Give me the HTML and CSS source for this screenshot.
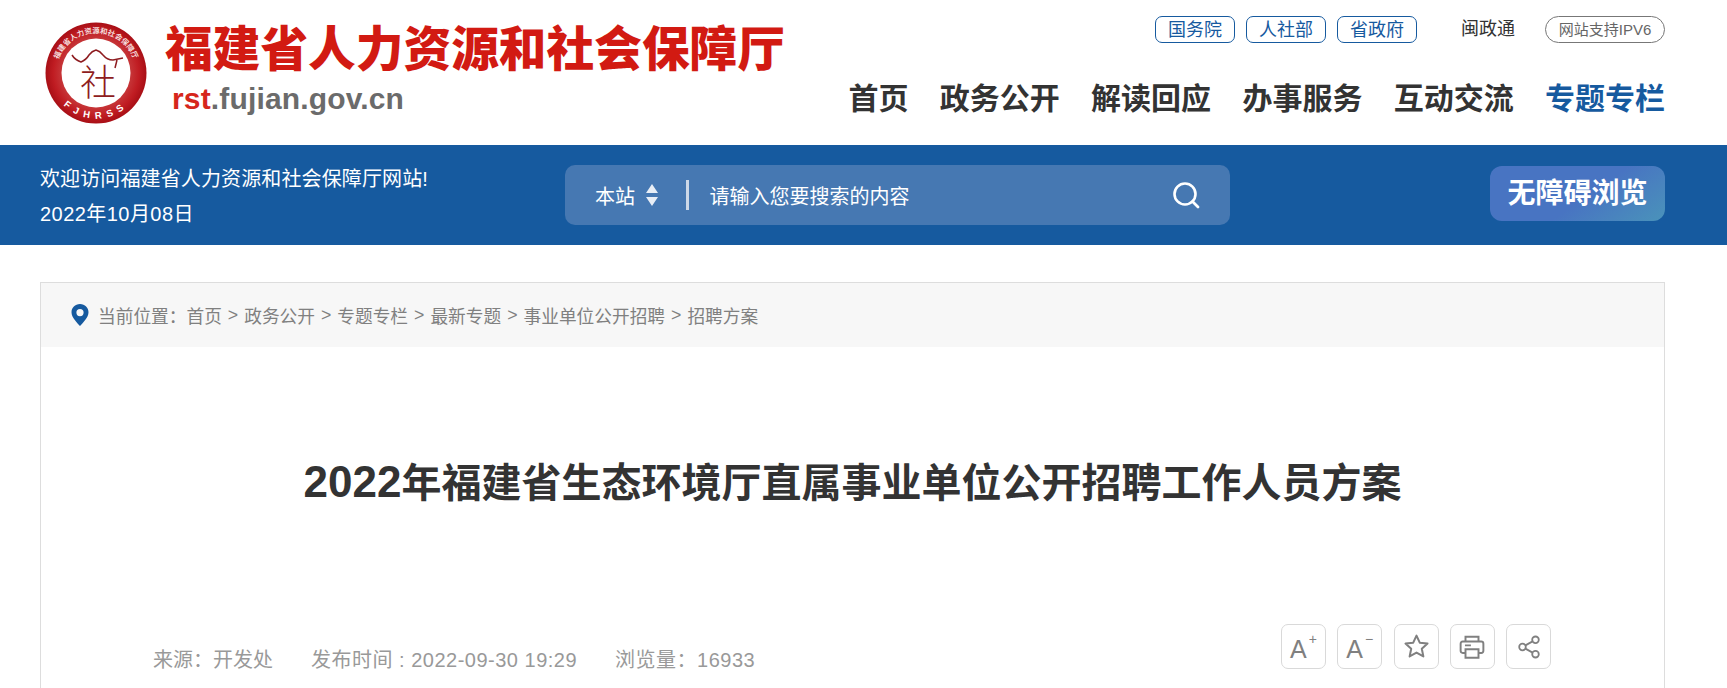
FILE: index.html
```html
<!DOCTYPE html>
<html lang="zh-CN">
<head>
<meta charset="utf-8">
<title>福建省人力资源和社会保障厅</title>
<link rel="stylesheet" href="styles.css">
</head>
<body>
<header class="site-header">
  <a class="brand">
    <svg class="logo" viewBox="0 0 102 102" width="102" height="102">
      <defs>
        <radialGradient id="ring" cx="50%" cy="50%" r="50%">
          <stop offset="0.65" stop-color="#c73a3c"/>
          <stop offset="0.85" stop-color="#c01c22"/>
          <stop offset="1" stop-color="#a80f16"/>
        </radialGradient>
        <path id="arcTop" d="M12.5 62 A40 40 0 1 1 89.5 62"/>
        <path id="arcBottom" d="M8 66 A45.5 45.5 0 0 0 94 66"/>
      </defs>
      <circle cx="51" cy="51" r="50.5" fill="url(#ring)"/>
      <circle cx="51" cy="51" r="34.5" fill="#fff"/>
      <text class="logo-arc"><textPath href="#arcTop" startOffset="50%" text-anchor="middle">福建省人力资源和社会保障厅</textPath></text>
      <text class="logo-en"><textPath href="#arcBottom" startOffset="50%" text-anchor="middle">FJHRSS</textPath></text>
      <path class="logo-roof" d="M27 33 Q30 38 36 40 Q41 38 44 33 Q47 29 51 28 Q55 29 58 33 Q62 38 68 38 L78 36 M72 38 L70 46"/>
      <text class="logo-char" x="53" y="74" text-anchor="middle">社</text>
    </svg>
    <div class="brand-text">
      <div class="brand-name">福建省人力资源和社会保障厅</div>
      <div class="brand-url"><span class="url-red">rst</span>.fujian.gov.cn</div>
    </div>
  </a>
  <div class="header-right">
    <div class="top-links">
      <a class="pill">国务院</a>
      <a class="pill">人社部</a>
      <a class="pill">省政府</a>
      <a class="plain-link">闽政通</a>
      <a class="pill pill-grey">网站支持IPV6</a>
    </div>
    <nav class="main-nav">
      <a>首页</a>
      <a>政务公开</a>
      <a>解读回应</a>
      <a>办事服务</a>
      <a>互动交流</a>
      <a class="active">专题专栏</a>
    </nav>
  </div>
</header>

<section class="blue-bar">
  <div class="welcome">
    <div class="welcome-line">欢迎访问福建省人力资源和社会保障厅网站!</div>
    <div class="welcome-date">2022年10月08日</div>
  </div>
  <div class="search">
    <span class="scope">本站</span>
    <svg class="scope-arrows" viewBox="0 0 12 22" width="12" height="22">
      <path d="M6 0 L12 9 L0 9 Z M0 13 L12 13 L6 22 Z" fill="#e8eef6"/>
    </svg>
    <span class="search-div"></span>
    <span class="placeholder">请输入您要搜索的内容</span>
    <svg class="search-icon" viewBox="0 0 28 28" width="28" height="28">
      <circle cx="13" cy="13" r="10.5" fill="none" stroke="#fff" stroke-width="2.6"/>
      <path d="M20.5 20.5 L26 26" stroke="#fff" stroke-width="2.8" stroke-linecap="round"/>
    </svg>
  </div>
  <a class="access-btn">无障碍浏览</a>
</section>

<main class="card">
  <div class="crumbs">
    <svg class="pin" viewBox="0 0 18 22" width="18" height="22">
      <path fill-rule="evenodd" d="M9 0 C4 0 .5 3.7 .5 8.3 C.5 13.5 6 18.8 9 22 C12 18.8 17.500 13.500 17.500 8.300 C17.500 3.700 14 0 9 0 Z M9 5 A3.600 3.600 0 1 1 9 12.200 A3.600 3.600 0 1 1 9 5 Z" fill="#165a9f"/>
    </svg>
    <span>当前位置&#xFF1A;</span>
    <a>首页</a><i>&gt;</i><a>政务公开</a><i>&gt;</i><a>专题专栏</a><i>&gt;</i><a>最新专题</a><i>&gt;</i><a>事业单位公开招聘</a><i>&gt;</i><a>招聘方案</a>
  </div>
  <h1 class="article-title"><span class="title-num">2022</span>年福建省生态环境厅直属事业单位公开招聘工作人员方案</h1>
  <div class="meta-row">
    <div class="meta">
      <span>来源&#xFF1A;开发处</span>
      <span class="meta-num">发布时间 : 2022-09-30 19:29</span>
      <span class="meta-num">浏览量&#xFF1A;16933</span>
    </div>
    <div class="tools">
      <button class="tool"><span class="tool-a">A</span><sup class="tool-sup">+</sup></button>
      <button class="tool"><span class="tool-a">A</span><sup class="tool-sup">−</sup></button>
      <button class="tool">
        <svg viewBox="0 0 24 24" width="27" height="27"><path d="M12 2.300 L14.900 8.600 L21.800 9.400 L16.700 14 L18.100 20.800 L12 17.400 L5.900 20.800 L7.300 14 L2.200 9.400 L9.100 8.600 Z" fill="none" stroke="#808080" stroke-width="1.800" stroke-linejoin="round"/></svg>
      </button>
      <button class="tool">
        <svg viewBox="0 0 24 24" width="26" height="26"><path d="M6 7 V2.500 H18 V7 M6 17.500 H3.500 Q1.500 17.500 1.500 15.500 V9 Q1.500 7 3.500 7 H20.500 Q22.500 7 22.500 9 V15.500 Q22.500 17.500 20.500 17.500 H18 M6 14 H18 V22 H6 Z M5.500 10.500 H11" fill="none" stroke="#808080" stroke-width="1.800"/></svg>
      </button>
      <button class="tool">
        <svg viewBox="0 0 24 24" width="24" height="24"><g fill="none" stroke="#808080" stroke-width="1.800"><circle cx="18.500" cy="4.800" r="3.300"/><circle cx="18.500" cy="19.200" r="3.300"/><circle cx="5.500" cy="12" r="3.300"/><path d="M8.400 10.400 L15.600 6.400 M8.400 13.600 L15.600 17.600"/></g></svg>
      </button>
    </div>
  </div>
</main>
</body>
</html>
```
FILE: styles.css
```css
* { box-sizing: border-box; }
html, body { margin: 0; padding: 0; height: 688px; overflow: hidden; background: #fff; }
body { font-family: "Liberation Sans", "Noto Sans CJK SC", sans-serif; color: #333; }

.site-header {
  height: 145px;
  padding: 0 62px 0 45px;
  display: flex;
  justify-content: space-between;
}
.brand { display: flex; align-items: flex-start; padding-top: 22px; }
.logo { flex: none; display: block; }
.logo-arc { font-size: 7.4px; font-weight: 700; fill: #f4dcdc; letter-spacing: .1px; }
.logo-en { font-family: "Liberation Sans", sans-serif; font-size: 9.5px; font-weight: 700; fill: #fff; letter-spacing: 5.8px; }
.logo-roof { fill: none; stroke: #8e1c20; stroke-width: 1.5; }
.logo-char { font-size: 36px; font-weight: 300; fill: #8e1c20; }
.brand-text { margin-left: 18px; margin-top: 0; }
.brand-name {
  font-size: 47.700px;
  line-height: 56px;
  font-weight: 900;
  color: #d21a12;
  white-space: nowrap;
}
.brand-url {
  margin: 5px 0 0 7px;
  font-size: 30px;
  line-height: 32px;
  font-weight: 700;
  letter-spacing: .15px;
  color: #6b6b6b;
}
.url-red { color: #d6261c; }

.header-right { display: flex; flex-direction: column; align-items: flex-end; }
.top-links { display: flex; align-items: center; margin-top: 15px; }
.pill {
  width: 80px;
  height: 27px;
  margin-right: 11px;
  border: 1px solid #165a9f;
  border-radius: 7px;
  color: #165a9f;
  font-size: 18px;
  line-height: 26px;
  text-align: center;
}
.plain-link { margin: 0 30px 0 33px; font-size: 18px; line-height: 28px; color: #333; }
.pill-grey {
  width: 120px;
  margin-right: 0;
  border-color: #777;
  border-radius: 14px;
  color: #666;
  font-size: 15px;
}
.main-nav { display: flex; gap: 31.300px; margin-top: 36px; }
.main-nav a { font-size: 30px; line-height: 40px; font-weight: 700; color: #333; }
.main-nav .active { color: #165a9f; }

.blue-bar {
  height: 100px;
  padding: 0 62px 0 40px;
  background: #165a9f;
  display: flex;
  align-items: center;
  color: #fff;
}
.welcome { width: 525px; padding-top: 4px; font-size: 20px; line-height: 35px; }
.welcome-line { letter-spacing: .12px; }
.welcome-date { letter-spacing: .45px; }
.search {
  width: 665px;
  height: 60px;
  padding: 0 30px;
  background: #4678b2;
  border-radius: 10px;
  display: flex;
  align-items: center;
}
.scope { font-size: 20px; }
.scope-arrows { margin-left: 11px; }
.search-div { width: 2.500px; height: 30px; margin: 0 21px 0 28px; background: #ccd8e8; }
.placeholder { flex: 1; font-size: 20px; }
.access-btn {
  width: 175px;
  height: 55px;
  margin: -3px 0 0 auto;
  background: linear-gradient(145deg, #4874c2 55%, #4a93ba 100%);
  border-radius: 12px;
  font-size: 28px;
  font-weight: 700;
  line-height: 55px;
  text-align: center;
}

.card {
  width: 1625px;
  height: 500px;
  margin: 37px 0 0 40px;
  border: 1px solid #ddd;
  border-bottom: 0;
}
.crumbs {
  height: 64px;
  padding-left: 30px;
  background: #f7f7f7;
  display: flex;
  align-items: center;
  font-size: 17.700px;
  color: #808080;
}
.pin { margin-right: 9px; }
.crumbs i { font-style: normal; margin: 0 6px; }
.article-title {
  margin: 103px 0 0;
  font-size: 40px;
  line-height: 64px;
  font-weight: 700;
  text-align: center;
  color: #333;
}
.title-num { font-size: 44px; }
.meta-row {
  display: flex;
  justify-content: space-between;
  align-items: flex-start;
  margin-top: 109px;
  padding: 0 113px 0 112px;
}
.meta { display: flex; gap: 38px; margin-top: 20px; font-size: 20px; color: #999; }
.meta-num { letter-spacing: .5px; }
.tools { display: flex; gap: 11.250px; }
.tool {
  width: 45px;
  height: 45px;
  padding: 0;
  background: #fff;
  border: 1px solid #d9d9d9;
  border-radius: 7px;
  display: flex;
  align-items: center;
  justify-content: center;
}
.tool-a { font-family: "Liberation Sans", sans-serif; font-size: 25px; line-height: 30px; margin-top: 4px; color: #808080; font-weight: 400; }
.tool-sup { font-family: "Liberation Sans", sans-serif; font-size: 14px; line-height: 14px; color: #808080; align-self: flex-start; margin: 7px 0 0 2px; }
```
